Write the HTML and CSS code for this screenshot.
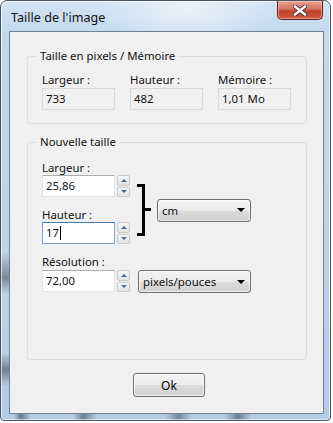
FILE: index.html
```html
<!DOCTYPE html>
<html lang="fr">
  <head>
    <meta charset="UTF-8" />
    <title>Taille de l'image</title>
    <link rel="stylesheet" href="styles.css">
  </head>
  <body>
    <div class="window">
      <div class="titlebar">
        <span class="title">Taille de l'image</span>
        <button class="close" aria-label="Fermer">
          <svg width="14" height="11" viewBox="0 0 14 11">
            <path d="M2 1.5 L12 9.5 M12 1.5 L2 9.5" stroke="#3b2a2a" stroke-width="4.2" stroke-linecap="square" />
            <path d="M2 1.5 L12 9.5 M12 1.5 L2 9.5" stroke="#ffffff" stroke-width="2.4" stroke-linecap="square" />
          </svg>
        </button>
      </div>

      <div class="client">
        <fieldset class="group group-info">
          <legend>Taille en pixels / Mémoire</legend>
          <div class="info-row">
            <div class="info-field">
              <div class="label">Largeur :</div>
              <div class="readonly">733</div>
            </div>
            <div class="info-field">
              <div class="label">Hauteur :</div>
              <div class="readonly">482</div>
            </div>
            <div class="info-field">
              <div class="label">Mémoire :</div>
              <div class="readonly">1,01 Mo</div>
            </div>
          </div>
        </fieldset>

        <fieldset class="group group-size">
          <legend>Nouvelle taille</legend>
          <div class="size-row">
            <div class="size-fields">
              <div class="label">Largeur :</div>
              <div class="spin-field">
                <div class="textbox">25,86</div>
                <div class="spinner">
                  <span class="spin-btn up"></span>
                  <span class="spin-btn down"></span>
                </div>
              </div>
              <div class="label label-gap">Hauteur :</div>
              <div class="spin-field">
                <div class="textbox focused">17<span class="caret"></span></div>
                <div class="spinner">
                  <span class="spin-btn up"></span>
                  <span class="spin-btn down"></span>
                </div>
              </div>
            </div>
            <div class="link">
              <div class="bracket"></div>
              <div class="tick"></div>
              <div class="combo combo-unit">cm<span class="arrow"></span></div>
            </div>
          </div>

          <div class="label label-res">Résolution :</div>
          <div class="res-row">
            <div class="spin-field">
              <div class="textbox">72,00</div>
              <div class="spinner">
                <span class="spin-btn up"></span>
                <span class="spin-btn down"></span>
              </div>
            </div>
            <div class="combo combo-res">pixels/pouces<span class="arrow"></span></div>
          </div>
        </fieldset>

        <div class="actions">
          <button class="ok">Ok</button>
        </div>
      </div>
    </div>
  </body>
</html>
```

FILE: styles.css
```css
* {
  margin: 0;
  padding: 0;
  box-sizing: border-box;
}

body {
  background: #ffffff;
  font-family: "Noto Sans", "Open Sans", sans-serif;
  font-size: 11.4px;
  color: #111111;
}

/* Window frame */
.window {
  width: 331px;
  height: 421px;
  border: 1px solid #4b5663;
  border-radius: 7px 7px 4px 4px;
  background:
    linear-gradient(to right, transparent 4%, rgba(40, 50, 60, 0.55) 6%, transparent 9%, transparent 22%, rgba(40, 50, 60, 0.5) 25%, transparent 29%, transparent 50%, rgba(40, 50, 60, 0.45) 54%, transparent 58%, transparent 68%, rgba(40, 50, 60, 0.5) 72%, transparent 76%) left bottom / 100% 7px no-repeat,
    linear-gradient(to bottom, transparent 60%, rgba(40, 50, 60, 0.45) 66%, transparent 70%, transparent 84%, rgba(40, 50, 60, 0.5) 88%, transparent 92%) left top / 8px 100% no-repeat,
    radial-gradient(ellipse 90px 40px at 185px 10px, rgba(255, 255, 255, 0.55), rgba(255, 255, 255, 0) 100%),
    linear-gradient(to bottom, #d3e4f4 0%, #c2d8ee 8%, #bcd3ea 60%, #b3cce6 100%);
  box-shadow: inset 0 0 0 1px rgba(255, 255, 255, 0.6);
}

.titlebar {
  height: 30px;
  display: flex;
  align-items: flex-start;
}

.title {
  margin: 8px 0 0 10px;
  line-height: 17px;
  font-size: 12.6px;
}

.close {
  margin-left: auto;
  margin-right: 7px;
  width: 46px;
  height: 19px;
  border: 1px solid #5a1f1f;
  border-top: none;
  border-radius: 0 0 5px 5px;
  background: linear-gradient(to bottom, #e8a493 0%, #d4715c 45%, #c0402a 55%, #cd5a3f 100%);
  box-shadow: inset 0 0 0 1px rgba(255, 220, 210, 0.5);
  display: flex;
  align-items: center;
  justify-content: center;
}

/* Client area */
.client {
  margin: 0 6px 0 8px;
  height: 383px;
  border: 1px solid #6f8194;
  background: #f0f0f0;
  padding: 0 16px 0 17px;
}

.group {
  border: 1px solid #d5dfe5;
  border-radius: 3px;
  padding: 0 0 0 14px;
}

.group legend {
  margin-left: -5px;
  padding: 0 3px;
  line-height: 16px;
}

.group-info {
  margin-top: 16px;
  padding-bottom: 13px;
}

.group-size {
  margin-top: 10px;
  padding-bottom: 66px;
}

.label {
  line-height: 15px;
}

/* Read-only info boxes */
.info-row {
  display: flex;
  gap: 15px;
  margin-top: 8px;
}

.readonly {
  width: 73px;
  height: 22px;
  margin-top: 1px;
  border: 1px solid #d9d9d9;
  background: #f0f0f0;
  padding: 0 3px;
  line-height: 20px;
}

/* Nouvelle taille */
.size-row {
  display: flex;
  margin-top: 10px;
}

.label-gap {
  margin-top: 10px;
}

.label-res {
  margin-top: 10px;
  line-height: 16px;
}

.spin-field {
  display: flex;
  gap: 2px;
}

.textbox {
  width: 73px;
  height: 22px;
  background: #ffffff;
  border: 1px solid #e2e3ea;
  border-top-color: #abadb3;
  padding: 0 3px;
  line-height: 20px;
  display: flex;
  align-items: center;
}

.textbox.focused {
  border-color: #7da2ce;
  border-top-color: #3d7bad;
}

.caret {
  width: 1px;
  height: 14px;
  background: #000000;
  margin-left: 1px;
}

.spinner {
  width: 13px;
  height: 22px;
  display: flex;
  flex-direction: column;
  gap: 1px;
}

.spin-btn {
  flex: 1;
  border: 1px solid #c8c8c8;
  border-radius: 2px;
  background: linear-gradient(to bottom, #f7f7f7, #e2e2e2);
  display: flex;
  align-items: center;
  justify-content: center;
}

.spin-btn::before {
  content: "";
  border-left: 3px solid transparent;
  border-right: 3px solid transparent;
}

.spin-btn.up::before {
  border-bottom: 3px solid #4e6b8c;
}

.spin-btn.down::before {
  border-top: 3px solid #4e6b8c;
}

.link {
  display: flex;
  align-items: center;
  align-self: flex-end;
  margin: 0 0 8px 7px;
}

.bracket {
  width: 8px;
  height: 52px;
  border: 3px solid #000000;
  border-left: none;
}

.tick {
  width: 6px;
  height: 3px;
  margin-top: -1px;
  background: #000000;
}

/* Combo boxes */
.combo {
  height: 23px;
  border: 1px solid #707070;
  border-radius: 3px;
  background: linear-gradient(to bottom, #f2f2f2 0%, #ebebeb 50%, #dddddd 51%, #cfcfcf 100%);
  box-shadow: inset 0 0 0 1px rgba(255, 255, 255, 0.6);
  display: flex;
  align-items: center;
  padding: 0 5px 0 4px;
}

.combo .arrow {
  margin-left: auto;
  border-left: 4px solid transparent;
  border-right: 4px solid transparent;
  border-top: 4px solid #000000;
}

.combo-unit {
  width: 94px;
  margin-left: 6px;
}

.res-row {
  display: flex;
  gap: 8px;
}

.combo-res {
  width: 113px;
}

/* Bottom button */
.actions {
  display: flex;
  justify-content: center;
  margin-top: 13px;
}

.ok {
  width: 72px;
  height: 24px;
  margin-left: 4px;
  border: 1px solid #707070;
  border-radius: 3px;
  background: linear-gradient(to bottom, #f2f2f2 0%, #ebebeb 50%, #dddddd 51%, #cfcfcf 100%);
  box-shadow: inset 0 0 0 1px rgba(255, 255, 255, 0.7);
  font-family: "Noto Sans", "Open Sans", sans-serif;
  font-size: 12px;
  color: #000000;
}
```
